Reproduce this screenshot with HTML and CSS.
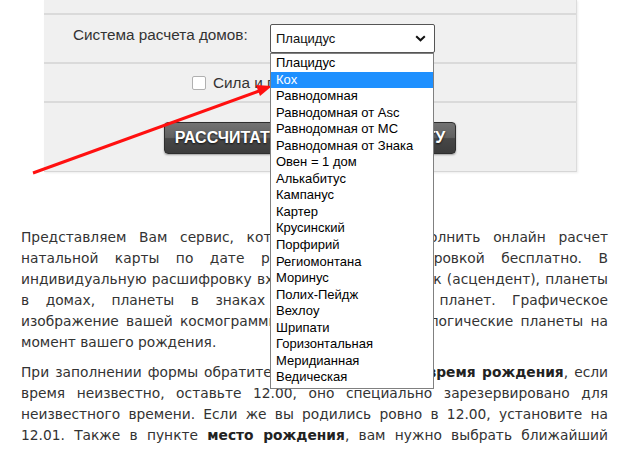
FILE: index.html
```html
<!DOCTYPE html>
<html lang="ru">
<head>
    <meta charset="UTF-8">
    <meta name="viewport" content="width=device-width, initial-scale=1.0">
    <title>Натальная карта онлайн</title>
    <link rel="stylesheet" href="styles.css">
</head>
<body>

<div class="page">

    <div class="panel">
        <div class="row row-top"></div>

        <div class="row row-houses">
            <label class="label">Система расчета домов:</label>
            <div class="select-wrap">
                <div class="select">
                    <span>Плацидус</span>
                    <svg class="chevron" width="11" height="7" viewBox="0 0 11 7">
                        <path d="M1.2 1.2 L5.5 5.3 L9.8 1.2" fill="none" stroke="#111" stroke-width="2"/>
                    </svg>
                </div>
                <ul class="options">
                    <li>Плацидус</li>
                    <li class="active">Кох</li>
                    <li>Равнодомная</li>
                    <li>Равнодомная от Asc</li>
                    <li>Равнодомная от MC</li>
                    <li>Равнодомная от Знака</li>
                    <li>Овен = 1 дом</li>
                    <li>Алькабитус</li>
                    <li>Кампанус</li>
                    <li>Картер</li>
                    <li>Крусинский</li>
                    <li>Порфирий</li>
                    <li>Региомонтана</li>
                    <li>Моринус</li>
                    <li>Полих-Пейдж</li>
                    <li>Вехлоу</li>
                    <li>Шрипати</li>
                    <li>Горизонтальная</li>
                    <li>Меридианная</li>
                    <li>Ведическая</li>
                </ul>
            </div>
        </div>

        <div class="row row-check">
            <span class="checkbox"></span>
            <span class="check-text">Сила и положение</span>
        </div>

        <div class="row row-button">
            <button type="button" class="btn">Рассчитать натальную карту</button>
        </div>
    </div>

    <div class="text">
        <p>Представляем Вам сервис, который позволит выполнить онлайн расчет натальной карты по дате рождения с расшифровкой бесплатно. В индивидуальную расшифровку входит восходящий знак (асцендент), планеты в домах, планеты в знаках зодиака, аспекты планет. Графическое изображение вашей космограммы покажет все астрологические планеты на момент вашего рождения.</p>
        <p>При заполнении формы обратите внимание на пункт <b>время рождения</b>, если время неизвестно, оставьте 12.00, оно специально зарезервировано для неизвестного времени. Если же вы родились ровно в 12.00, установите на 12.01. Также в пункте <b>место рождения</b>, вам нужно выбрать ближайший населенный пункт к месту вашего рождения.</p>
    </div>

    <!-- стрелка поверх формы -->
    <svg class="arrow" width="629" height="450" viewBox="0 0 629 450">
        <line x1="33" y1="173" x2="259" y2="91" stroke="#ff1010" stroke-width="3"/>
        <polygon points="272,86 260,96 256,85" fill="#ff1010"/>
    </svg>

</div>

</body>
</html>
```

FILE: styles.css
```css
body {
    margin: 0;
    background-color: #fff;
    font-family: "Liberation Sans", Arial, sans-serif;
}
.page {
    position: relative;
    width: 587px;
    padding: 0 21px;
    height: 450px;
    overflow: hidden;
}
.panel {
    margin: 0 31px 0 23px;
    background-color: #f0f0f0;
    border-right: 1px solid #dcdcdc;
    border-bottom: 1px solid #d6d6d6;
    box-shadow: 1px 1px 2px rgba(0, 0, 0, 0.08);
}
.row {
    border-bottom: 2px solid #dadada;
}
.row:last-child {
    border-bottom: none;
}
.row-top {
    height: 13px;
}
.row-houses {
    display: flex;
    align-items: flex-start;
    height: 38px;
    padding: 9px 0 0 29px;
    box-sizing: content-box;
}
.label {
    width: 197px;
    font-size: 15.3px;
    line-height: 20px;
    margin-top: 1px;
    color: #333;
}
.select-wrap {
    position: relative;
}
.select {
    display: flex;
    align-items: center;
    justify-content: space-between;
    width: 165px;
    height: 29px;
    box-sizing: border-box;
    padding: 0 8px 0 5px;
    border: 1px solid #555;
    border-radius: 2px;
    background-color: #fff;
    font-size: 13px;
    color: #111;
}
.chevron {
    display: block;
}
.options {
    position: absolute;
    z-index: 3;
    top: 29px;
    left: 0;
    width: 164px;
    box-sizing: border-box;
    margin: 0;
    padding: 1px 0 2px;
    list-style: none;
    background-color: #fff;
    border: 1px solid #808080;
    font-size: 13px;
    color: #000;
}
.options li {
    height: 16.55px;
    line-height: 16.55px;
    padding-left: 5px;
    white-space: nowrap;
}
.options li.active {
    background-color: #1e90ff;
    color: #fff;
}
.row-check {
    display: flex;
    align-items: center;
    height: 37px;
    padding-left: 148px;
    font-size: 15.3px;
    color: #333;
}
.checkbox {
    width: 12px;
    height: 12px;
    margin-right: 7px;
    border: 1px solid #b0b0b0;
    border-radius: 2px;
    background-color: #fff;
}
.row-button {
    display: flex;
    justify-content: center;
    padding: 19px 0 17px;
}
.btn {
    width: 292px;
    height: 32px;
    padding: 0;
    border: 1px solid #2e2e2e;
    border-radius: 4px;
    background: linear-gradient(to bottom, #737373 0%, #616161 48%, #474747 52%, #3c3c3c 100%);
    box-shadow: 0 1px 2px rgba(0, 0, 0, 0.35);
    color: #fff;
    font-family: "Liberation Sans", Arial, sans-serif;
    font-size: 16px;
    font-weight: bold;
    text-transform: uppercase;
    text-shadow: 0 1px 2px rgba(0, 0, 0, 0.8);
    cursor: pointer;
}
.text {
    margin-top: 55px;
    font-family: "DejaVu Sans", Verdana, sans-serif;
    font-size: 13.8px;
    line-height: 21px;
    color: #333;
    text-align: justify;
}
.text p {
    margin: 0 0 9px;
}
.text b {
    color: #222;
}
.arrow {
    position: absolute;
    z-index: 2;
    top: 0;
    left: 0;
    pointer-events: none;
}
```
